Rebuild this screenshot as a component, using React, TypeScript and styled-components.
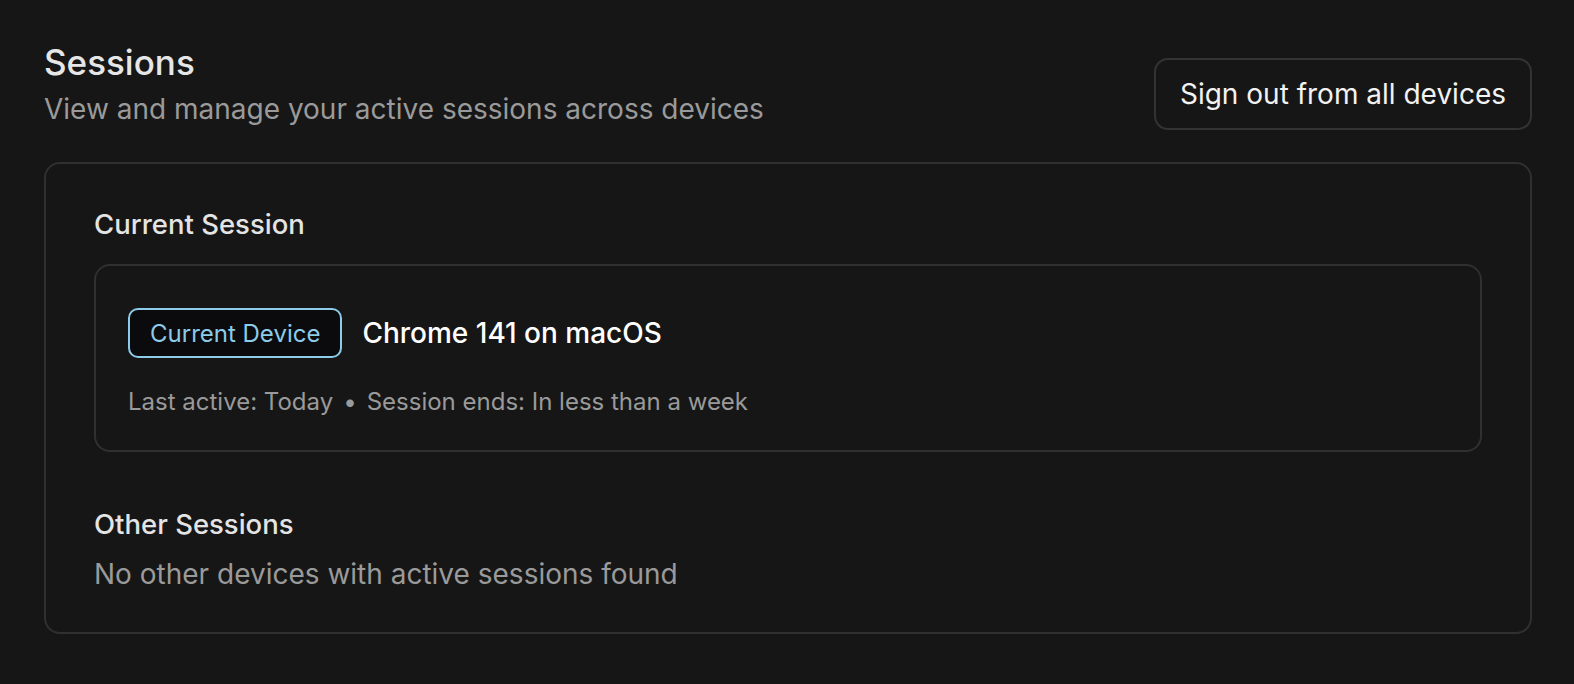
import * as React from 'react'
import styled, { createGlobalStyle } from 'styled-components'

const GlobalStyle = createGlobalStyle`
  html, body {
    margin: 0;
    padding: 0;
    background: #161616;
  }
  body {
    font-family: Inter, "Noto Sans", sans-serif;
    color: #ececec;
  }
`

const App = () => {
  return (
    <>
      <GlobalStyle />
      <Page>
        <Header>
          <TitleBlock>
            <Title>Sessions</Title>
            <Subtitle>View and manage your active sessions across devices</Subtitle>
          </TitleBlock>
          <SignOutButton>Sign out from all devices</SignOutButton>
        </Header>
        <Card>
          <Section gap={22}>
            <SectionTitle>Current Session</SectionTitle>
            <SessionBox>
              <DeviceRow>
                <Badge>Current Device</Badge>
                <DeviceName>Chrome 141 on macOS</DeviceName>
              </DeviceRow>
              <Meta>
                Last active: Today
                <Dot>•</Dot>
                Session ends: In less than a week
              </Meta>
            </SessionBox>
          </Section>
          <Section gap={14}>
            <SectionTitle>Other Sessions</SectionTitle>
            <Empty>No other devices with active sessions found</Empty>
          </Section>
        </Card>
      </Page>
    </>
  )
}

const Page = styled.div`
  padding: 40px 42px 40px 44px;
  display: flex;
  flex-direction: column;
  gap: 32px;
`

const Header = styled.header`
  display: flex;
  flex-direction: row;
  justify-content: space-between;
  align-items: flex-start;
`

const TitleBlock = styled.div`
  display: flex;
  flex-direction: column;
  gap: 7px;
`

const Title = styled.h1`
  margin: 0;
  font-size: 35px;
  font-weight: 500;
  line-height: 44px;
  color: #e6e6e6;
`

const Subtitle = styled.p`
  margin: 0;
  font-size: 28px;
  line-height: 36px;
  color: #9a9a9a;
`

const SignOutButton = styled.button`
  font-family: inherit;
  font-size: 28px;
  color: #f2f2f2;
  background: #161616;
  border: 2px solid #333;
  border-radius: 14px;
  height: 72px;
  padding: 0 24px;
  margin-top: 18px;
`

const Card = styled.div`
  border: 2px solid #303030;
  border-radius: 16px;
  padding: 42px 48px 40px;
  display: flex;
  flex-direction: column;
  gap: 54px;
`

const Section = styled.section<{ gap: number }>`
  display: flex;
  flex-direction: column;
  gap: ${p => p.gap}px;
`

const SectionTitle = styled.h2`
  margin: 0;
  font-size: 27.5px;
  font-weight: 500;
  line-height: 36px;
  color: #e4e4e4;
`

const SessionBox = styled.div`
  border: 2px solid #303030;
  border-radius: 16px;
  padding: 42px 32px 32px;
  display: flex;
  flex-direction: column;
  gap: 28px;
`

const DeviceRow = styled.div`
  display: flex;
  align-items: center;
  gap: 20px;
`

const Badge = styled.span`
  font-size: 24px;
  color: #8ccbe9;
  background: #0b0b0d;
  border: 2px solid #8ccbe9;
  border-radius: 10px;
  height: 50px;
  box-sizing: border-box;
  padding: 0 20px;
  display: inline-flex;
  align-items: center;
`

const DeviceName = styled.span`
  font-size: 28px;
  font-weight: 500;
  color: #ffffff;
`

const Meta = styled.div`
  font-size: 24px;
  line-height: 32px;
  color: #9a9a9a;
`

const Dot = styled.span`
  margin: 0 10px;
`

const Empty = styled.p`
  margin: 0;
  font-size: 28px;
  line-height: 36px;
  color: #9a9a9a;
`

export default App
